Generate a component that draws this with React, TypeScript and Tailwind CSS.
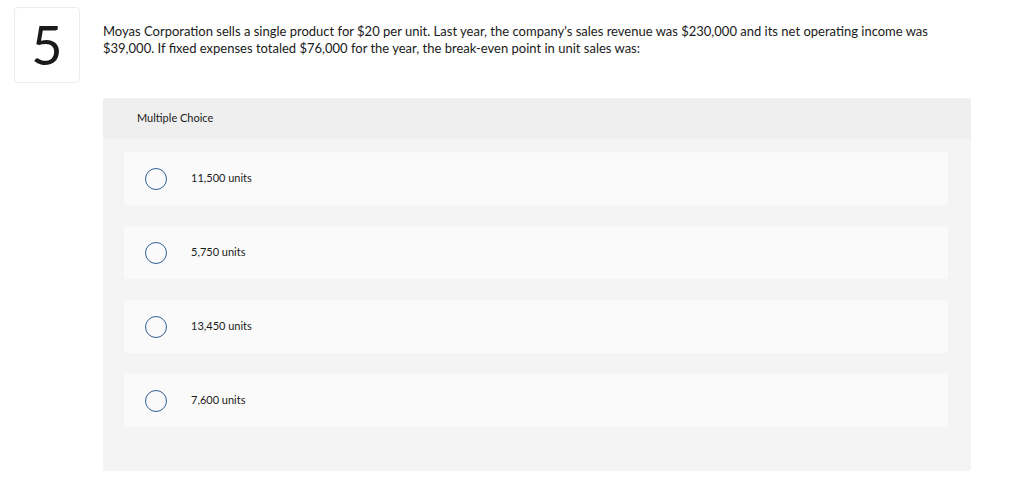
import React from 'react'

const options = ['11,500 units', '5,750 units', '13,450 units', '7,600 units']

export default function App() {
  return (
    <div className="min-h-[493px] bg-white font-['Lato',sans-serif] text-[#1a1a1a]">
      <div className="flex items-start pl-[14px] pt-[7px]">
        {/* Numero de pregunta */}
        <div className="flex h-[76px] w-[66px] shrink-0 items-center justify-center rounded-[4px] border border-[#ececec]">
          <span className="text-[54px] font-normal leading-none">5</span>
        </div>
        <div className="ml-[23px] w-[870px]">
          <p className="pt-[16px] text-[13px] leading-[17px]">
            Moyas Corporation sells a single product for $20 per unit. Last year, the company's sales revenue was
            $230,000 and its net operating income was $39,000. If fixed expenses totaled $76,000 for the year, the
            break-even point in unit sales was:
          </p>

          {/* Panel de opciones */}
          <div className="mt-[41px] w-[868px] overflow-hidden rounded-[2px] bg-[#f4f4f4]">
            <div className="flex h-[41px] items-center bg-[#efefef] pl-[34px] text-[11px]">Multiple Choice</div>
            <div className="flex flex-col gap-[21px] pb-[44px] pl-[21px] pr-[23px] pt-[13px]">
              {options.map((o) => (
                <div key={o} className="flex h-[53px] items-center rounded-[2px] bg-[#fafafa]">
                  <span className="ml-[21px] h-[22px] w-[22px] rounded-full border border-[#2f5f94]" />
                  <span className="ml-[24px] text-[11px]">{o}</span>
                </div>
              ))}
            </div>
          </div>
        </div>
      </div>
    </div>
  )
}
